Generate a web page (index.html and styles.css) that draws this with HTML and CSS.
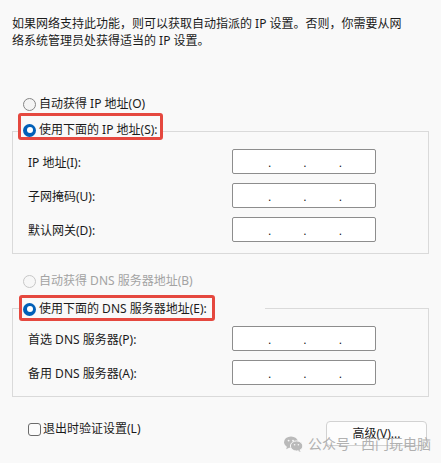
FILE: index.html
```html
<!DOCTYPE html>
<html lang="zh-CN">
<head>
<meta charset="utf-8">
<link rel="stylesheet" href="styles.css">
</head>
<body>
<div class="page">
  <p class="intro">如果网络支持此功能，则可以获取自动指派的 IP 设置。否则，你需要从网络系统管理员处获得适当的 IP 设置。</p>

  <div class="radio-row first-auto">
    <span class="radio"></span><span>自动获得 IP 地址(O)</span>
  </div>

  <div class="legend-wrap legend-ip">
    <div class="legend legend1">
      <span class="radio checked"></span><span>使用下面的 IP 地址(S):</span>
    </div>
  </div>
  <div class="group group1">
    <div class="field-grid">
      <span class="label">IP 地址(I):</span>
      <div class="ipbox"><span>.</span><span>.</span><span>.</span></div>
      <span class="label">子网掩码(U):</span>
      <div class="ipbox"><span>.</span><span>.</span><span>.</span></div>
      <span class="label">默认网关(D):</span>
      <div class="ipbox"><span>.</span><span>.</span><span>.</span></div>
    </div>
  </div>

  <div class="radio-row dns-auto disabled">
    <span class="radio"></span><span>自动获得 DNS 服务器地址(B)</span>
  </div>

  <div class="legend-wrap legend-dns">
    <div class="legend legend2">
      <span class="radio checked"></span><span>使用下面的 DNS 服务器地址(E):</span>
    </div>
  </div>
  <div class="group group2">
    <div class="field-grid">
      <span class="label">首选 DNS 服务器(P):</span>
      <div class="ipbox"><span>.</span><span>.</span><span>.</span></div>
      <span class="label">备用 DNS 服务器(A):</span>
      <div class="ipbox"><span>.</span><span>.</span><span>.</span></div>
    </div>
  </div>

  <div class="footer">
    <label class="check-row"><span class="checkbox"></span><span>退出时验证设置(L)</span></label>
    <button class="btn">高级(V)...</button>
  </div>

  <div class="watermark">
    <svg class="wm-icon" width="19" height="16" viewBox="0 0 19 16">
      <ellipse cx="7" cy="6.2" rx="7" ry="5.8" fill="#b4b4b4"/>
      <path d="M3 10.5 L2.2 13.2 L5.6 11.6 Z" fill="#b4b4b4"/>
      <ellipse cx="12.6" cy="10" rx="6.2" ry="5.1" fill="#b4b4b4" stroke="#f9f9f9" stroke-width="1"/>
      <path d="M15.6 14 L16.6 15.9 L13.8 14.8 Z" fill="#b4b4b4"/>
      <circle cx="4.6" cy="4.6" r="0.95" fill="#f9f9f9"/>
      <circle cx="9" cy="4.6" r="0.95" fill="#f9f9f9"/>
      <circle cx="10.6" cy="8.8" r="0.8" fill="#f9f9f9"/>
      <circle cx="14.4" cy="8.8" r="0.8" fill="#f9f9f9"/>
    </svg>
    <span class="wm-text">公众号 · 西门玩电脑</span>
  </div>
</div>
</body>
</html>
```

FILE: styles.css
```css
* { box-sizing: border-box; }

html, body {
  margin: 0;
  padding: 0;
  background: #f9f9f9;
}

body {
  font-family: "Noto Sans", "Noto Sans CJK SC", sans-serif;
  font-size: 12px;
  color: #1b1b1b;
  width: 441px;
  height: 463px;
  overflow: hidden;
}

.page {
  position: relative;
  padding-top: 15px;
  height: 463px;
}

.intro {
  margin: 0 0 0 12px;
  width: 396px;
  line-height: 17px;
}

.radio-row {
  display: flex;
  align-items: center;
  height: 14px;
  line-height: 14px;
  padding-left: 23px;
  gap: 3px;
}

.first-auto { margin-top: 48px; }

.dns-auto { margin-top: 20px; }

.disabled { color: #a3a3a3; }

.radio {
  flex: none;
  width: 13px;
  height: 13px;
  border-radius: 50%;
  border: 1px solid #858585;
  background: #f4f4f4;
  position: relative;
}

.disabled .radio {
  border-color: #c7c7c7;
  background: #f7f7f7;
}

.radio.checked {
  border: none;
  background: #005fb8;
}

.radio.checked::after {
  content: "";
  position: absolute;
  left: 3.5px;
  top: 3.5px;
  width: 6px;
  height: 6px;
  border-radius: 50%;
  background: #ffffff;
}

.legend-wrap {
  position: relative;
  z-index: 1;
  display: flex;
  width: max-content;
  background: #f9f9f9;
}

.legend-ip {
  margin: 2px 0 0 18px;
}

.legend-dns {
  margin: 7px 0 0 19px;
  padding-right: 50px;
}

.legend {
  display: flex;
  align-items: center;
  gap: 3px;
  border: 3px solid #e5483f;
  border-radius: 3px;
  line-height: 14px;
}

.legend1 {
  padding: 7px 2px 0 2px;
}

.legend2 {
  padding: 4px 5px 2px 1px;
}

.group {
  margin: 0 12px;
  border: 1px solid #dadada;
  padding: 17px 0 11px 15px;
}

.group1 { margin-top: -9px; }
.group2 { margin-top: -13px; }

.field-grid {
  display: grid;
  grid-template-columns: 204px 144px;
  grid-auto-rows: 25px;
  row-gap: 9px;
  align-items: center;
}

.label {
  line-height: 14px;
  padding-top: 2px;
}

.ipbox {
  height: 25px;
  background: #ffffff;
  border: 1px solid #8d8d8d;
  border-radius: 2px;
  display: flex;
  align-items: center;
  padding-left: 35px;
  gap: 32px;
  font-family: "Liberation Sans", sans-serif;
  font-size: 12px;
  line-height: 12px;
  color: #111;
}

.ipbox span {
  position: relative;
  top: 1px;
}

.footer {
  display: flex;
  justify-content: space-between;
  align-items: flex-start;
  margin-top: 24px;
  padding: 0 14px 0 28px;
}

.check-row {
  display: flex;
  align-items: center;
  gap: 2px;
  margin-top: 1px;
  line-height: 14px;
}

.checkbox {
  width: 13px;
  height: 13px;
  border: 1px solid #6b6b6b;
  border-radius: 3px;
  background: #fbfbfb;
}

.btn {
  width: 101px;
  height: 25px;
  border: 1px solid #d2d2d2;
  border-radius: 4px;
  background: #fdfdfd;
  font-family: inherit;
  font-size: 12px;
  color: #1b1b1b;
  padding: 0;
  line-height: 14px;
}

.watermark {
  position: absolute;
  left: 284px;
  top: 436px;
  display: flex;
  align-items: center;
  gap: 5px;
  white-space: nowrap;
  opacity: 0.9;
}

.wm-text {
  font-size: 14px;
  line-height: 16px;
  color: #a9a9a9;
}
```
